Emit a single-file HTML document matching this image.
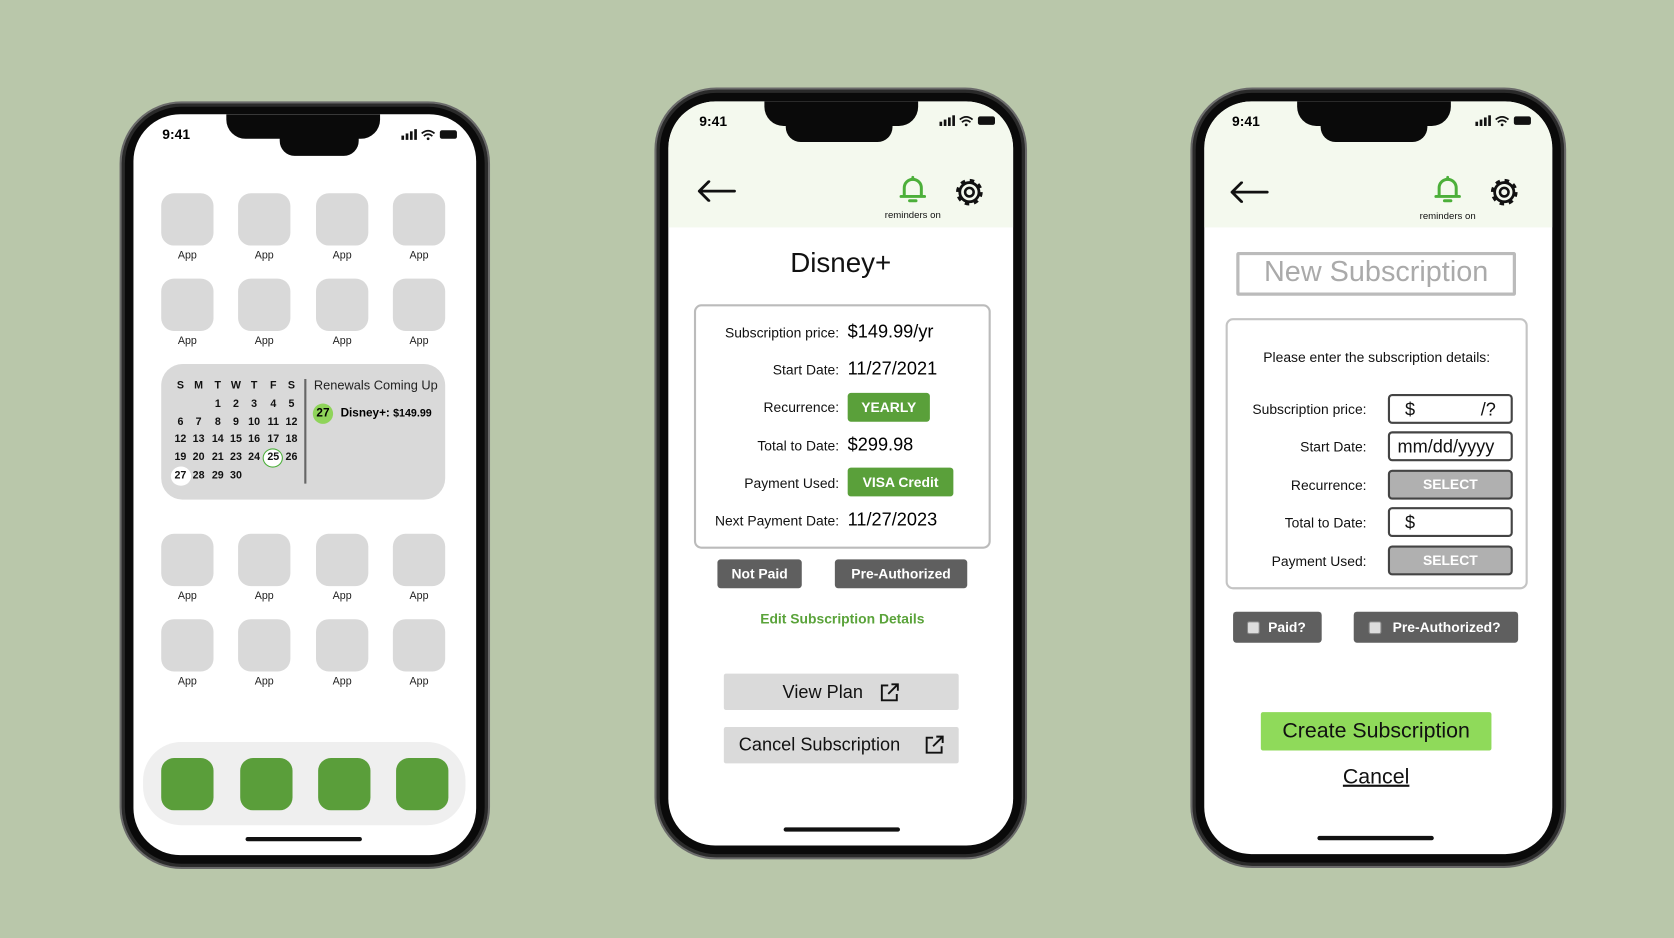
<!DOCTYPE html>
<html><head><meta charset="utf-8"><style>
*{margin:0;padding:0;box-sizing:border-box}
html,body{width:1674px;height:938px;overflow:hidden;background:#b9c7aa;font-family:"Liberation Sans",sans-serif}
#w{position:absolute;left:0;top:0;width:1568px;height:879px;transform:scale(1.0676);transform-origin:0 0}
.a{position:absolute}
.frame{position:absolute;background:#0a0a0a;border:2px solid #6a6a6a;border-radius:58px;box-shadow:inset 0 0 0 3px #2a2a2a}
.scr{position:absolute;background:#fff;border-radius:44px;overflow:hidden}
.notch{position:absolute;background:#0a0a0a}
.t{position:absolute;white-space:nowrap}
.app{position:absolute;width:49px;height:49px;background:#d9d9d9;border-radius:12px}
.lab{position:absolute;width:49px;text-align:center;font-size:10px;color:#222}
.dock{position:absolute;width:49px;height:49px;background:#5a9e3a;border-radius:12px}
.cal{position:absolute;font-size:10px;font-weight:bold;color:#111;width:18px;text-align:center}
.hb{position:absolute;height:4px;background:#111;border-radius:2px;width:109px}
.btn{position:absolute;color:#fff;font-weight:bold;text-align:center;border-radius:3px}
.lbl{position:absolute;text-align:right;font-size:13px;color:#111;white-space:nowrap}
.inp{position:absolute;left:172px;width:117px;height:28px;border:2px solid #444;border-radius:4px;font-size:17px;color:#111}
</style></head><body><div id="w">

<!-- PHONE 1 -->
<div class="frame" style="left:112px;top:95px;width:347px;height:719px"></div>
<div class="scr" style="left:125px;top:107px;width:321px;height:694px">
  <div class="notch" style="left:87px;top:0;width:144px;height:23px;border-radius:0 0 18px 18px"></div>
  <div class="notch" style="left:137px;top:10px;width:74px;height:29px;border-radius:0 0 14px 14px"></div>
  <div class="t" style="left:27px;top:11px;font-size:13px;font-weight:bold">9:41</div>
  <svg class="a" style="left:250px;top:13px" width="56" height="12"><rect x="1" y="7" width="2.5" height="4" fill="#111"/><rect x="5" y="5" width="2.5" height="6" fill="#111"/><rect x="9" y="3" width="2.5" height="8" fill="#111"/><rect x="13" y="1" width="2.5" height="10" fill="#111"/><path d="M20 5 Q26 0 32 5 M22 7.5 Q26 4 30 7.5" stroke="#111" stroke-width="1.6" fill="none"/><circle cx="26" cy="10" r="1.3" fill="#111"/><rect x="37" y="2" width="16" height="8" rx="2" fill="#111"/></svg>
</div>
<div class="app" style="left:151px;top:181px"></div><div class="app" style="left:223px;top:181px"></div><div class="app" style="left:296px;top:181px"></div><div class="app" style="left:368px;top:181px"></div>
<div class="lab" style="left:151px;top:234px">App</div><div class="lab" style="left:223px;top:234px">App</div><div class="lab" style="left:296px;top:234px">App</div><div class="lab" style="left:368px;top:234px">App</div>
<div class="app" style="left:151px;top:261px"></div><div class="app" style="left:223px;top:261px"></div><div class="app" style="left:296px;top:261px"></div><div class="app" style="left:368px;top:261px"></div>
<div class="lab" style="left:151px;top:314px">App</div><div class="lab" style="left:223px;top:314px">App</div><div class="lab" style="left:296px;top:314px">App</div><div class="lab" style="left:368px;top:314px">App</div>
<div class="a" style="left:151px;top:341px;width:266px;height:127px;background:#d9d9d9;border-radius:20px"></div>
<div class="a" style="left:285px;top:355px;width:2px;height:98px;background:#666"></div>
<div class="t" style="left:294px;top:354px;font-size:12px;color:#222">Renewals Coming Up</div>
<div class="a" style="left:293px;top:378px;width:19px;height:19px;border-radius:50%;background:#8fd45a"></div>
<div class="t" style="left:293px;top:381px;width:19px;text-align:center;font-size:11px;font-weight:bold">27</div>
<div class="t" style="left:319px;top:381px;font-size:11px;font-weight:bold">Disney+: <span style="font-size:10px">$149.99</span></div>
<div class="a" style="left:246px;top:420px;width:19px;height:18px;border-radius:50%;background:#fff;border:1.5px solid #4caf3a"></div>
<div class="a" style="left:160px;top:437px;width:19px;height:18px;border-radius:50%;background:#fff"></div>
<div class="app" style="left:151px;top:500px"></div><div class="app" style="left:223px;top:500px"></div><div class="app" style="left:296px;top:500px"></div><div class="app" style="left:368px;top:500px"></div>
<div class="lab" style="left:151px;top:553px">App</div><div class="lab" style="left:223px;top:553px">App</div><div class="lab" style="left:296px;top:553px">App</div><div class="lab" style="left:368px;top:553px">App</div>
<div class="app" style="left:151px;top:580px"></div><div class="app" style="left:223px;top:580px"></div><div class="app" style="left:296px;top:580px"></div><div class="app" style="left:368px;top:580px"></div>
<div class="lab" style="left:151px;top:633px">App</div><div class="lab" style="left:223px;top:633px">App</div><div class="lab" style="left:296px;top:633px">App</div><div class="lab" style="left:368px;top:633px">App</div>
<div class="a" style="left:134px;top:695px;width:302px;height:78px;background:#efefef;border-radius:36px"></div>
<div class="dock" style="left:151px;top:710px"></div><div class="dock" style="left:225px;top:710px"></div><div class="dock" style="left:298px;top:710px"></div><div class="dock" style="left:371px;top:710px"></div>
<div class="hb" style="left:230px;top:784px"></div>

<!-- PHONE 2 -->
<div class="frame" style="left:613px;top:82px;width:349px;height:723px"></div>
<div class="scr" style="left:626px;top:95px;width:323px;height:697px">
  <div class="a" style="left:0;top:0;width:323px;height:118px;background:#f4f9ee"></div>
  <div class="notch" style="left:90px;top:0;width:144px;height:23px;border-radius:0 0 18px 18px"></div>
  <div class="notch" style="left:110px;top:10px;width:100px;height:28px;border-radius:0 0 14px 14px"></div>
  <div class="t" style="left:29px;top:11px;font-size:13px;font-weight:bold">9:41</div>
  <svg class="a" style="left:253px;top:12px" width="56" height="12"><rect x="1" y="7" width="2.5" height="4" fill="#111"/><rect x="5" y="5" width="2.5" height="6" fill="#111"/><rect x="9" y="3" width="2.5" height="8" fill="#111"/><rect x="13" y="1" width="2.5" height="10" fill="#111"/><path d="M20 5 Q26 0 32 5 M22 7.5 Q26 4 30 7.5" stroke="#111" stroke-width="1.6" fill="none"/><circle cx="26" cy="10" r="1.3" fill="#111"/><rect x="37" y="2" width="16" height="8" rx="2" fill="#111"/></svg>
  <svg class="a" style="left:26px;top:74px" width="38" height="20"><path d="M36 10H3M12 1L3 10L12 19" stroke="#111" stroke-width="2.6" fill="none" stroke-linecap="round" stroke-linejoin="round"/></svg>
  <svg class="a" style="left:216px;top:69px" width="26" height="28"><path d="M5 20V12a8 8 0 0 1 16 0v8M2 20h22" stroke="#4caf3a" stroke-width="2.8" fill="none" stroke-linecap="round"/><path d="M10 24h6" stroke="#4caf3a" stroke-width="2.8" stroke-linecap="round"/><path d="M13 2v2" stroke="#4caf3a" stroke-width="2.6" stroke-linecap="round"/></svg>
  <div class="t" style="left:189px;top:101px;width:80px;text-align:center;font-size:9px;color:#111">reminders on</div>
  <svg class="a" style="left:267px;top:70px" width="30" height="30"><circle cx="15" cy="15" r="10.5" stroke="#111" stroke-width="4" fill="none" stroke-dasharray="4 4.25"/><circle cx="15" cy="15" r="9" stroke="#111" stroke-width="2.6" fill="none"/><circle cx="15" cy="15" r="4" stroke="#111" stroke-width="2.4" fill="none"/></svg>
  <div class="t" style="left:0;top:136px;width:323px;text-align:center;font-size:26px;color:#111">Disney+</div>
  <div class="a" style="left:24px;top:190px;width:278px;height:229px;border:2px solid #bbb;border-radius:7px"></div>
  <div class="lbl" style="right:163px;top:209px">Subscription price:</div><div class="t" style="left:168px;top:206px;font-size:17px">$149.99/yr</div>
  <div class="lbl" style="right:163px;top:244px">Start Date:</div><div class="t" style="left:168px;top:241px;font-size:17px">11/27/2021</div>
  <div class="lbl" style="right:163px;top:279px">Recurrence:</div><div class="btn" style="left:168px;top:273px;width:77px;height:27px;background:#5aa03a;font-size:13px;line-height:27px">YEARLY</div>
  <div class="lbl" style="right:163px;top:315px">Total to Date:</div><div class="t" style="left:168px;top:312px;font-size:17px">$299.98</div>
  <div class="lbl" style="right:163px;top:350px">Payment Used:</div><div class="btn" style="left:168px;top:343px;width:99px;height:27px;background:#5aa03a;font-size:13px;line-height:27px">VISA Credit</div>
  <div class="lbl" style="right:163px;top:385px">Next Payment Date:</div><div class="t" style="left:168px;top:382px;font-size:17px">11/27/2023</div>
  <div class="btn" style="left:46px;top:429px;width:79px;height:27px;background:#5f5f5f;font-size:13px;line-height:27px">Not Paid</div>
  <div class="btn" style="left:156px;top:429px;width:124px;height:27px;background:#5f5f5f;font-size:13px;line-height:27px">Pre-Authorized</div>
  <div class="t" style="left:0;top:477px;width:326px;text-align:center;font-size:13px;font-weight:bold;color:#5aa33a">Edit Subscription Details</div>
  <div class="a" style="left:52px;top:536px;width:220px;height:34px;background:#dadada;border-radius:2px"></div>
  <div class="t" style="left:107px;top:544px;font-size:17px;color:#111">View Plan</div>
  <svg class="a" style="left:198px;top:544px" width="19" height="19"><path d="M8 3H2V17H16V11M11 2H17V8M17 2L8 11" stroke="#111" stroke-width="1.8" fill="none"/></svg>
  <div class="a" style="left:52px;top:586px;width:220px;height:34px;background:#dadada;border-radius:2px"></div>
  <div class="t" style="left:66px;top:593px;font-size:17px;color:#111">Cancel Subscription</div>
  <svg class="a" style="left:240px;top:593px" width="19" height="19"><path d="M8 3H2V17H16V11M11 2H17V8M17 2L8 11" stroke="#111" stroke-width="1.8" fill="none"/></svg>
  <div class="hb" style="left:108px;top:680px"></div>
</div>

<!-- PHONE 3 -->
<div class="frame" style="left:1115px;top:82px;width:352px;height:731px"></div>
<div class="scr" style="left:1128px;top:95px;width:326px;height:705px">
  <div class="a" style="left:0;top:0;width:326px;height:118px;background:#f4f9ee"></div>
  <div class="notch" style="left:87px;top:0;width:144px;height:23px;border-radius:0 0 18px 18px"></div>
  <div class="notch" style="left:109px;top:10px;width:100px;height:28px;border-radius:0 0 14px 14px"></div>
  <div class="t" style="left:26px;top:11px;font-size:13px;font-weight:bold">9:41</div>
  <svg class="a" style="left:253px;top:12px" width="56" height="12"><rect x="1" y="7" width="2.5" height="4" fill="#111"/><rect x="5" y="5" width="2.5" height="6" fill="#111"/><rect x="9" y="3" width="2.5" height="8" fill="#111"/><rect x="13" y="1" width="2.5" height="10" fill="#111"/><path d="M20 5 Q26 0 32 5 M22 7.5 Q26 4 30 7.5" stroke="#111" stroke-width="1.6" fill="none"/><circle cx="26" cy="10" r="1.3" fill="#111"/><rect x="37" y="2" width="16" height="8" rx="2" fill="#111"/></svg>
  <svg class="a" style="left:23px;top:75px" width="38" height="20"><path d="M36 10H3M12 1L3 10L12 19" stroke="#111" stroke-width="2.6" fill="none" stroke-linecap="round" stroke-linejoin="round"/></svg>
  <svg class="a" style="left:215px;top:69px" width="26" height="28"><path d="M5 20V12a8 8 0 0 1 16 0v8M2 20h22" stroke="#4caf3a" stroke-width="2.8" fill="none" stroke-linecap="round"/><path d="M10 24h6" stroke="#4caf3a" stroke-width="2.8" stroke-linecap="round"/><path d="M13 2v2" stroke="#4caf3a" stroke-width="2.6" stroke-linecap="round"/></svg>
  <div class="t" style="left:188px;top:102px;width:80px;text-align:center;font-size:9px;color:#111">reminders on</div>
  <svg class="a" style="left:266px;top:70px" width="30" height="30"><circle cx="15" cy="15" r="10.5" stroke="#111" stroke-width="4" fill="none" stroke-dasharray="4 4.25"/><circle cx="15" cy="15" r="9" stroke="#111" stroke-width="2.6" fill="none"/><circle cx="15" cy="15" r="4" stroke="#111" stroke-width="2.4" fill="none"/></svg>
  <div class="a" style="left:30px;top:141px;width:262px;height:41px;border:3px solid #bbb;border-radius:2px"></div>
  <div class="t" style="left:30px;top:144px;width:262px;text-align:center;font-size:27px;color:#aaa">New Subscription</div>
  <div class="a" style="left:20px;top:203px;width:283px;height:254px;border:2px solid #c4c4c4;border-radius:7px"></div>
  <div class="t" style="left:20px;top:232px;width:283px;text-align:center;font-size:13px;color:#111">Please enter the subscription details:</div>
  <div class="lbl" style="right:174px;top:281px">Subscription price:</div><div class="inp" style="top:274px;padding:3px 0 0 14px">$<span style="position:absolute;left:85px">/?</span></div>
  <div class="lbl" style="right:174px;top:316px">Start Date:</div><div class="inp" style="top:309px;padding:3px 0 0 7px">mm/dd/yyyy</div>
  <div class="lbl" style="right:174px;top:352px">Recurrence:</div><div class="inp" style="top:345px;background:#b0b0b0;color:#fff;font-size:13px;font-weight:bold;text-align:center;line-height:24px">SELECT</div>
  <div class="lbl" style="right:174px;top:387px">Total to Date:</div><div class="inp" style="top:380px;padding:3px 0 0 14px">$</div>
  <div class="lbl" style="right:174px;top:423px">Payment Used:</div><div class="inp" style="top:416px;background:#b0b0b0;color:#fff;font-size:13px;font-weight:bold;text-align:center;line-height:24px">SELECT</div>
  <div class="btn" style="left:27px;top:478px;width:83px;height:29px;background:#5f5f5f;font-size:13px;line-height:29px;padding-left:18px">Paid?<span style="position:absolute;left:13px;top:9px;width:12px;height:12px;background:#ddd;border:1px solid #888;border-radius:2px"></span></div>
  <div class="btn" style="left:140px;top:478px;width:154px;height:29px;background:#5f5f5f;font-size:13px;line-height:29px;padding-left:20px">Pre-Authorized?<span style="position:absolute;left:14px;top:9px;width:12px;height:12px;background:#ddd;border:1px solid #888;border-radius:2px"></span></div>
  <div class="a" style="left:53px;top:572px;width:216px;height:36px;background:#8fda5a;border-radius:2px"></div>
  <div class="t" style="left:53px;top:579px;width:216px;text-align:center;font-size:20px;color:#111">Create Subscription</div>
  <div class="t" style="left:0;top:622px;width:322px;text-align:center;font-size:20px;color:#111;text-decoration:underline">Cancel</div>
  <div class="hb" style="left:106px;top:688px"></div>
</div>

<!-- calendar numbers -->
<div class="cal" style="left:160px;top:356px">S</div><div class="cal" style="left:177px;top:356px">M</div><div class="cal" style="left:195px;top:356px">T</div><div class="cal" style="left:212px;top:356px">W</div><div class="cal" style="left:229px;top:356px">T</div><div class="cal" style="left:247px;top:356px">F</div><div class="cal" style="left:264px;top:356px">S</div>
<div class="cal" style="left:195px;top:373px">1</div><div class="cal" style="left:212px;top:373px">2</div><div class="cal" style="left:229px;top:373px">3</div><div class="cal" style="left:247px;top:373px">4</div><div class="cal" style="left:264px;top:373px">5</div>
<div class="cal" style="left:160px;top:390px">6</div><div class="cal" style="left:177px;top:390px">7</div><div class="cal" style="left:195px;top:390px">8</div><div class="cal" style="left:212px;top:390px">9</div><div class="cal" style="left:229px;top:390px">10</div><div class="cal" style="left:247px;top:390px">11</div><div class="cal" style="left:264px;top:390px">12</div>
<div class="cal" style="left:160px;top:406px">12</div><div class="cal" style="left:177px;top:406px">13</div><div class="cal" style="left:195px;top:406px">14</div><div class="cal" style="left:212px;top:406px">15</div><div class="cal" style="left:229px;top:406px">16</div><div class="cal" style="left:247px;top:406px">17</div><div class="cal" style="left:264px;top:406px">18</div>
<div class="cal" style="left:160px;top:423px">19</div><div class="cal" style="left:177px;top:423px">20</div><div class="cal" style="left:195px;top:423px">21</div><div class="cal" style="left:212px;top:423px">23</div><div class="cal" style="left:229px;top:423px">24</div><div class="cal" style="left:247px;top:423px">25</div><div class="cal" style="left:264px;top:423px">26</div>
<div class="cal" style="left:160px;top:440px">27</div><div class="cal" style="left:177px;top:440px">28</div><div class="cal" style="left:195px;top:440px">29</div><div class="cal" style="left:212px;top:440px">30</div>

</div></body></html>
